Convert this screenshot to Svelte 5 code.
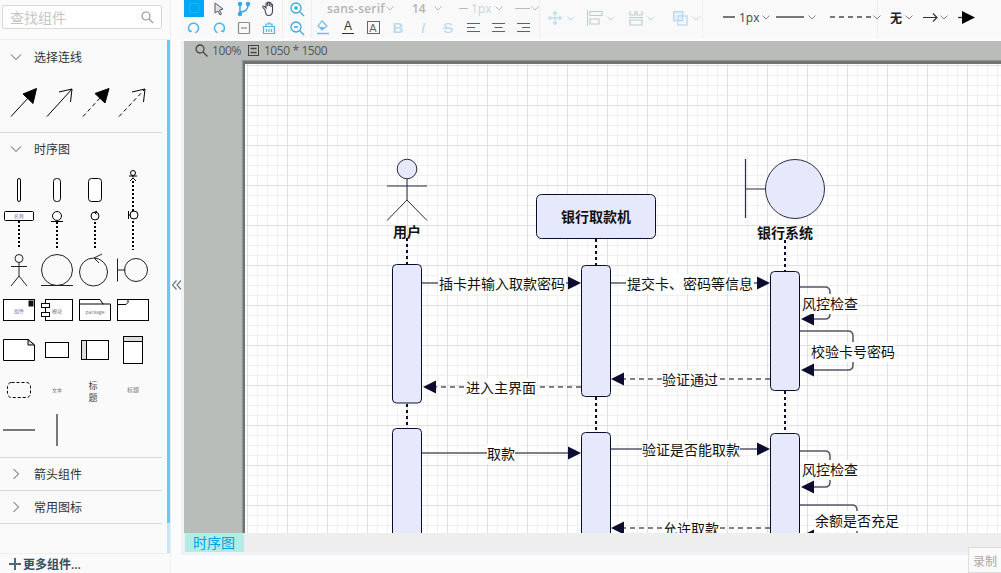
<script>
  const labels = [
    { t: '插卡并输入取款密码', x: 502, y: 284, w: 128 },
    { t: '提交卡、密码等信息', x: 690, y: 284, w: 128 },
    { t: '风控检查', x: 830, y: 304, w: 56 },
    { t: '校验卡号密码', x: 853, y: 352, w: 84 },
    { t: '验证通过', x: 690, y: 380, w: 56 },
    { t: '进入主界面', x: 501, y: 388, w: 70 },
    { t: '取款', x: 501, y: 454, w: 28 },
    { t: '验证是否能取款', x: 691, y: 450, w: 98 },
    { t: '风控检查', x: 830, y: 470, w: 56 },
    { t: '余额是否充足', x: 857, y: 521, w: 84 },
    { t: '允许取款', x: 691, y: 529, w: 56 }
  ];
  const activations = [
    [392.5, 264.5, 138.5], [581.5, 265.5, 131], [770.5, 271.5, 119],
    [392.5, 428.5, 130], [581.5, 432.5, 130], [770.5, 433.5, 130]
  ];
  const lifelines = [
    [407, 238, 264], [596, 239, 265], [785, 240, 271],
    [407, 404, 428], [596, 397, 432], [785, 391, 433]
  ];
  const right = (x, y) => `${x - 13},${y - 6.5} ${x},${y} ${x - 13},${y + 6.5}`;
  const left = (x, y) => `${x + 13},${y - 6.5} ${x},${y} ${x + 13},${y + 6.5}`;
</script>

{#snippet chev(cls = '')}
  <svg class="chev {cls}" width="8" height="5" viewBox="0 0 8 5"><path d="M.5.5 4 4 7.5.5" fill="none" stroke="currentColor" /></svg>
{/snippet}

{#snippet head(name, open)}
  <div class="head">
    <svg width="12" height="12" viewBox="0 0 12 12">
      {#if open}
        <path d="M1 3.500 6 8.500 11 3.500" fill="none" stroke="#555" />
      {:else}
        <path d="M3.500 1 8.500 6 3.500 11" fill="none" stroke="#555" />
      {/if}
    </svg>
    <span>{name}</span>
  </div>
{/snippet}

<div class="app">
  <aside class="side">
    <div class="searchwrap">
      <div class="search">
        <span>查找组件</span>
        <svg width="14" height="14" viewBox="0 0 14 14" fill="none" stroke="#999" stroke-width="1.200"><circle cx="6" cy="6" r="4" /><path d="m9 9 4 4" /></svg>
      </div>
    </div>
    <div class="sidebody">
      <div class="sections">
        <div class="first">{@render head('选择连线', true)}</div>
        <svg class="block" width="167" height="57" viewBox="0 75 167 57" fill="none" stroke="#000">
          <path d="M11 116.500 29 97" />
          <polygon points="36.500,88.500 23,94 33,103.500" fill="#000" />
          <path d="M47 116.500 72 89M59 92l13-3-1.500 13" />
          <path d="M83 116.500 100 98" stroke-dasharray="4 3" />
          <polygon points="109,88.500 95,93.500 105,103" fill="#000" />
          <path d="M119 116.500 145 89" stroke-dasharray="4 3" />
          <path d="M132 92l13-3-1.500 13" />
        </svg>
        <div class="rule"></div>
        {@render head('时序图', true)}
        <svg class="block palette" width="167" height="290" viewBox="0 167 167 290" fill="#fff" stroke="#000">
          <rect x="17.500" y="178.500" width="3" height="23" rx="1.500" />
          <rect x="53.500" y="178.500" width="7" height="23" rx="3" />
          <rect x="88.500" y="178.500" width="13" height="23" rx="3" />
          <g fill="none">
            <circle cx="133" cy="173" r="2.500" />
            <path d="M129 176h8M133 175.500v2M130 181l3-3 3 3" />
            <path d="M133 181v32M133 221v29M19 221v28M57 222v27M95 222v27" stroke-width="2" stroke-dasharray="2 2" />
            <circle cx="134" cy="215" r="4" />
            <path d="M128.500 211v8M128.500 215h2" />
            <circle cx="57" cy="216" r="4.500" />
            <path d="M51 221.500h12" />
            <circle cx="95" cy="216" r="4" />
            <path d="M97 211l-2.500 1.500 2 2" />
          </g>
          <rect x="4.500" y="211.500" width="29" height="9" rx="1" />
          <text class="tiny" x="19" y="218" text-anchor="middle">名称</text>
          <g fill="none" stroke="#222">
            <circle cx="19" cy="258.500" r="4" />
            <path d="M19 262.500V276M11 266.500h16M11 286l8-10 8 10" />
            <circle cx="57" cy="270" r="15.500" />
            <path d="M41 285.500h32" />
            <circle cx="93.500" cy="272" r="14" />
            <path d="M102 254l-8 4 5 5" />
            <path d="M117.500 258.500v23M117.500 270h8" />
            <circle cx="136" cy="270" r="11.500" />
          </g>

          <g>
            <rect x="3.500" y="299.500" width="31" height="21" />
            <rect x="28.500" y="300.500" width="5" height="6" fill="#111" stroke="none" />
            <text class="tiny" x="19" y="312.500" text-anchor="middle">组件</text>
            <rect x="45.500" y="299.500" width="27" height="21" />
            <rect x="41.500" y="303.500" width="8" height="4" />
            <rect x="41.500" y="312.500" width="8" height="4" />
            <text class="tiny" x="57" y="312.500" text-anchor="middle" dx="0">模块</text>
            <path d="M79.500 320.500v-21H100l3 4.500h7.500v16.500z" />
            <path d="M79.500 304h24" fill="none" />
            <text class="tiny" x="95" y="313.500" text-anchor="middle">package</text>
            <rect x="117.500" y="299.500" width="31" height="21" />
            <path d="M117.500 304.500H126l2-2v-3" fill="none" />
          </g>

          <g>
            <path d="M3.500 339.500H28l6.500 5.500v15.500h-31z" />
            <path d="M28 339.500v5.500h6.500z" fill="#ddd" />
            <rect x="45.500" y="342.500" width="23" height="15" />
            <rect x="81.500" y="340.500" width="27" height="19" />
            <rect x="81.500" y="340.500" width="5" height="19" fill="#ddd" />
            <rect x="123.500" y="336.500" width="19" height="27" />
            <rect x="123.500" y="336.500" width="19" height="5" fill="#ddd" />
          </g>

          <rect x="7.500" y="382.500" width="23" height="15" rx="4" stroke-dasharray="3 2" fill="none" />
          <text class="tiny" x="57" y="392" text-anchor="middle">文本</text>
          <text class="title" x="93" y="389" text-anchor="middle">标</text>
          <text class="title" x="93" y="401" text-anchor="middle">题</text>
          <text class="tiny wider" x="133" y="392" text-anchor="middle">标题</text>
          <path d="M3 430h32M57 414v32" stroke="#777" stroke-width="2" fill="none" />
        </svg>
        <div class="rule"></div>
        {@render head('箭头组件', false)}
        <div class="rule"></div>
        {@render head('常用图标', false)}
        <div class="rule"></div>
      </div>
      <div class="scroll"><div class="thumb"></div></div>
    </div>
    <div class="more">
      <svg width="12" height="12" viewBox="0 0 12 12"><path d="M6 0v12M0 6h12" stroke="#4a6a85" stroke-width="2" /></svg>
      <span>更多组件...</span>
    </div>
  </aside>

  <div class="collapse">
    <svg width="10" height="10" viewBox="0 0 10 10" fill="none" stroke="#64788a" stroke-width="1.200"><path d="M4.500 .5 .5 5l4 4.500M9 .5 5 5l4 4.500" /></svg>
  </div>

  <main class="main">
    <header class="toolbar">
      <div class="grp g1">
        <div class="tool">
          <svg class="sel" width="20" height="17" viewBox="0 0 20 17"><rect width="20" height="17" fill="#00a8f4" /><rect x="5.500" y="3.500" width="9" height="9" fill="none" stroke="#3fc0f8" stroke-dasharray="1 1" /></svg>
        </div>
        <div class="tool">
          <svg width="14" height="14" viewBox="0 0 14 14"><path d="M3 1l8 6-3.500 1 2 4-1.500 1-2-4L3 11z" fill="#dfe6ea" stroke="#556" /></svg>
        </div>
        <div class="tool">
          <svg width="16" height="16" viewBox="0 0 16 16" fill="none" stroke="#3aa8e0" stroke-width="1.500"><path d="M4 3v10M4 11c5 0 8-2 8-7" /><circle cx="4" cy="3" r="1.500" fill="#3aa8e0" /><circle cx="12" cy="3" r="1.500" fill="#3aa8e0" /><circle cx="4" cy="13" r="1.500" fill="#3aa8e0" /></svg>
        </div>
        <div class="tool">
          <svg width="16" height="16" viewBox="0 0 16 16" fill="none" stroke="#445" stroke-width="1.100"><path d="M4 9 2 6.500c-.7-1 .6-2 1.400-1.200L5 7V3c0-1.200 1.500-1.200 1.600 0v2-3c0-1.200 1.700-1.200 1.700 0v3-2.500c0-1.200 1.700-1.200 1.700 0V6 4c0-1 1.500-1 1.500 0v6c0 3-1.500 4.500-4 4.500S5 13 4 9z" /></svg>
        </div>
        <div class="tool">
          <svg width="14" height="14" viewBox="0 0 14 14" fill="none" stroke="#4db5ee" stroke-width="1.500"><path d="M2.800 10.500A5 5 0 1 1 8.500 11.800M1.500 8.500l1.300 2 2-.8" /></svg>
        </div>
        <div class="tool">
          <svg width="14" height="14" viewBox="0 0 14 14" fill="none" stroke="#4db5ee" stroke-width="1.500"><path d="M11.200 10.500A5 5 0 1 0 5.500 11.800M12.500 8.500l-1.300 2-2-.8" /></svg>
        </div>
        <div class="tool">
          <svg width="14" height="14" viewBox="0 0 14 14" fill="none" stroke="#8a8a8a" stroke-width="1.200"><rect x="1.500" y="1.500" width="11" height="11" rx="1" /><path d="M4 7h6" /></svg>
        </div>
        <div class="tool">
          <svg width="14" height="14" viewBox="0 0 14 14" fill="none" stroke="#4db5ee" stroke-width="1.200"><path d="M1.500 5.500h11v7h-11zM4 5.500V3h6v2.500M7 1v2M4.500 8v3M7 8v3M9.500 8v3" /></svg>
        </div>
      </div>

      <div class="grp g2">
        <div class="tool">
          <svg width="16" height="16" viewBox="0 0 16 16" fill="none" stroke="#3aa8e0" stroke-width="1.300"><circle cx="7" cy="7" r="5" /><path d="M11 11l4 4M5 7h4M7 5v4" /></svg>
        </div>
        <div class="tool">
          <svg width="16" height="16" viewBox="0 0 16 16" fill="none" stroke="#3aa8e0" stroke-width="1.300"><circle cx="7" cy="7" r="5" /><path d="M11 11l4 4M5 7h4" /></svg>
        </div>
      </div>

      <div class="grp g3">
        <div class="fontrow">
          <span class="fontname">sans-serif</span>
          {@render chev('c1')}
          <span class="fontsize">14</span>
          {@render chev('c2')}
          <span class="dash"></span>
          <span class="px">1px</span>
          {@render chev('c3')}
          <span class="dash wide"></span>
          {@render chev('c4')}
        </div>
        <div class="fmt">
          <span class="cell">
            <svg width="14" height="15" viewBox="0 0 14 15"><path d="M6 1 2 6l4 4 5-4z" fill="none" stroke="#6cc0ee" stroke-width="1.200" /><path d="M3 7h7l-4 3z" fill="#6cc0ee" /><path d="M1 13.500h12" stroke="#6cc0ee" stroke-width="1.500" /></svg>
          </span>
          <span class="cell a">A<i></i></span>
          <span class="cell boxa">A</span>
          <span class="cell fb">B</span>
          <span class="cell fi">I</span>
          <span class="cell fs">S</span>
          <span class="cell al"><svg width="13" height="11" viewBox="0 0 13 11" stroke="#456a80"><path d="M0 1.500h13M0 5.500h8M0 9.500h13" /></svg></span>
          <span class="cell al"><svg width="13" height="11" viewBox="0 0 13 11" stroke="#456a80"><path d="M0 1.500h13M2.500 5.500h8M0 9.500h13" /></svg></span>
          <span class="cell al"><svg width="13" height="11" viewBox="0 0 13 11" stroke="#456a80"><path d="M0 1.500h13M5 5.500h8M0 9.500h13" /></svg></span>
        </div>
      </div>

      <div class="grp g4">
        <span class="item i1">
          <svg width="16" height="16" viewBox="0 0 16 16" fill="none" stroke="#c4deee" stroke-width="1.300"><path d="M8 2v12M2 8h12M6 4l2-2.500L10 4M6 12l2 2.500 2-2.500M4 6 1.500 8 4 10M12 6l2.500 2-2.500 2" /></svg>
          {@render chev('lb')}
        </span>
        <span class="item i2">
          <svg width="16" height="16" viewBox="0 0 16 16" fill="none" stroke="#bccdd0" stroke-width="1.200"><path d="M.5 0v16M3 1.500h12v4H3zM3 9h9v5H3z" /></svg>
          {@render chev('lb')}
        </span>
        <span class="item i3">
          <svg width="14" height="16" viewBox="0 0 14 16" fill="none" stroke="#bccdd0" stroke-width="1.200"><path d="M1 1v4h5V1M8 1v4h5V1M0 7.500h14M1 10h12v5H1z" /></svg>
          {@render chev('lb')}
        </span>
        <span class="item i4">
          <svg width="15" height="15" viewBox="0 0 15 15" fill="#e6f0f8" stroke="#b8d8f0" stroke-width="1.300"><rect x=".7" y=".7" width="9" height="9" /><rect x="5" y="5" width="9" height="9" fill="none" /></svg>
          {@render chev('lb')}
        </span>
      </div>

      <div class="grp g5">
        <span class="ln short"></span>
        <span class="px1">1px</span>
        {@render chev('gray p1')}
        <span class="ln solid"></span>
        {@render chev('gray p2')}
        <span class="ln dashed"></span>
        {@render chev('gray p3')}
      </div>

      <div class="grp g6">
        <span class="wu">无</span>
        {@render chev('gray q1')}
        <svg class="q2" width="15" height="9" viewBox="0 0 15 9" fill="none" stroke="#333" stroke-width="1.200"><path d="M0 4.500h14M10 .5l4 4-4 4" /></svg>
        {@render chev('gray q3')}
        <svg class="q4" width="17" height="13" viewBox="0 0 17 13"><path d="M0 6.500h5" stroke="#333" stroke-width="1.300" /><polygon points="4,0 17,6.500 4,13" fill="#000" /></svg>
      </div>
    </header>

    <section class="stage">
      <div class="canvas">
        <div class="zoominfo">
          <svg width="13" height="13" viewBox="0 0 13 13" fill="none" stroke="#444" stroke-width="1.300"><circle cx="5" cy="5" r="4" /><path d="m8 8 4.500 4.500" /></svg>
          <span class="pct">100%</span>
          <svg class="pg" width="13" height="13" viewBox="0 0 13 13" fill="none" stroke="#444"><rect x="1.500" y="1.500" width="10" height="10" /><path d="M3.500 4.500h6M3.500 8.500h6" stroke-width="1.500" /></svg>
          <span>1050 * 1500</span>
        </div>
        <div class="page">
          <svg class="diagram" width="756" height="469" viewBox="245 64 756 469">
            <g fill="#e6e9fb" stroke="#2b2b45">
              <circle cx="407" cy="169" r="9.800" />
              <path d="M407 179v21M387 186h40M387 220.500l20-20.500 20 20.500" fill="none" />
              <circle cx="795" cy="189" r="29.500" />
              <path d="M745.500 159v59M745.500 189H765" fill="none" stroke-width="1.200" />
            </g>
            <rect class="node" x="536.500" y="194.500" width="119" height="44" rx="5" />
            {#each lifelines as [x, y1, y2]}
              <line class="life" x1={x} y1={y1} x2={x} y2={y2} />
            {/each}
            <text class="bold" x="407" y="237" text-anchor="middle">用户</text>
            <text class="bold" x="596" y="222" text-anchor="middle">银行取款机</text>
            <text class="bold" x="785" y="238" text-anchor="middle">银行系统</text>

            <g class="links">
              <path d="M421 283h148M610 283h148M421 453h148M610 449h148" />
              <path d="M800 287h25q5 0 5 5v22q0 5-5 5h-13M800 331h48q5 0 5 5v29q0 5-5 5h-36M800 451h25q5 0 5 5v26q0 5-5 5h-13M800 505h52q5 0 5 5v28" />
              <path d="M770 379H623M581 387H434M770 528H623" stroke-dasharray="5 4" />
            </g>

            {#each activations as [x, y, h]}
              <rect class="node" x={x} y={y} width="29" height={h} rx="4" />
            {/each}

            <g fill="#0c0c30">
              <polygon points={right(581, 283)} />
              <polygon points={right(770, 283)} />
              <polygon points={right(581, 453)} />
              <polygon points={right(770, 449)} />
              <polygon points={left(801, 319)} />
              <polygon points={left(801, 370)} />
              <polygon points={left(801, 487)} />
              <polygon points={left(801, 536)} />
              <polygon points={left(611, 379)} />
              <polygon points={left(423, 387)} />
              <polygon points={left(611, 528)} />
            </g>

            {#each labels as l}
              <rect x={l.x - l.w / 2} y={l.y - 10} width={l.w} height="20" fill="#fff" />
              <text class="label" x={l.x} y={l.y + 5} text-anchor="middle">{l.t}</text>
            {/each}
          </svg>
        </div>
      </div>
      <div class="tabs"><span class="tab">时序图</span></div>
    </section>
    <div class="foot"></div>
  </main>
  <button class="record">录制</button>
</div>

<style>
  :global(body) {
    margin: 0;
    background: #fbfbfb;
  }
  .app {
    position: relative;
    display: flex;
    width: 1001px;
    height: 573px;
    overflow: hidden;
    font-family: "Open Sans", "Noto Sans CJK SC", sans-serif;
    font-size: 12px;
    color: #333;
    background: #fbfbfb;
  }
  svg {
    flex: none;
    display: block;
  }
  .side {
    flex: none;
    box-sizing: border-box;
    width: 171px;
    height: 573px;
    display: flex;
    flex-direction: column;
    background: #fafafa;
    border-right: 1px solid #eeeeee;
  }
  .searchwrap {
    flex: none;
    height: 40px;
    box-sizing: border-box;
    padding: 5px 8px 0 2px;
    border-bottom: 1px solid #eeeeee;
  }
  .search {
    box-sizing: border-box;
    height: 24px;
    border: 1px solid #d9d9d9;
    border-radius: 2px;
    background: #fff;
    display: flex;
    align-items: center;
    justify-content: space-between;
    padding: 0 7px;
    font-size: 14px;
    color: #c6c6c6;
  }
  .sidebody {
    flex: 1;
    min-height: 0;
    display: flex;
  }
  .sections {
    width: 167px;
  }
  .block {
    display: block;
  }
  .head {
    height: 32px;
    display: flex;
    align-items: center;
    padding-left: 10px;
    gap: 12px;
    font-size: 12px;
    color: #333;
  }
  .first .head {
    height: 33px;
    margin-bottom: 2px;
  }
  .palette {
    margin-top: 2px;
  }
  .rule {
    width: 162px;
    height: 1px;
    background: #d9d9d9;
  }
  .tiny {
    font-size: 5px;
    fill: #777;
    stroke: none;
  }
  .wider {
    font-size: 6px;
  }
  .title {
    font-size: 9px;
    fill: #444;
    stroke: none;
  }
  .scroll {
    width: 3px;
    background: #c9e6f5;
  }
  .thumb {
    height: 483px;
    background: #66c8ff;
  }
  .more {
    flex: none;
    height: 20px;
    box-sizing: border-box;
    border-top: 1px solid #eeeeee;
    display: flex;
    align-items: center;
    gap: 2px;
    padding-left: 9px;
    font-weight: 600;
    color: #2f4f66;
  }
  .collapse {
    flex: none;
    width: 10px;
    height: 573px;
    box-sizing: border-box;
    padding-top: 280px;
    padding-left: 1px;
  }
  .main {
    flex: 1;
    min-width: 0;
    display: flex;
    flex-direction: column;
  }
  .toolbar {
    flex: none;
    height: 38px;
    display: flex;
    background: #f9f9f9;
  }
  .grp {
    flex: none;
    box-sizing: border-box;
    border-right: 1px solid #eeeeee;
    height: 38px;
  }
  .g1 {
    width: 102px;
    display: grid;
    grid-template-columns: repeat(4, 25px);
    grid-template-rows: 17px 21px;
  }
  .g2 {
    width: 29px;
    display: grid;
    grid-template-rows: 17px 21px;
  }
  .tool {
    display: flex;
    align-items: center;
    justify-content: center;
  }
  .g3 {
    width: 228px;
  }
  .fontrow {
    height: 17px;
    display: flex;
    align-items: center;
    color: #b4b4b4;
    font-weight: 600;
  }
  .fontname {
    margin-left: 15px;
    width: 54px;
    font-size: 12px;
    letter-spacing: .2px;
    white-space: nowrap;
  }
  .chev {
    color: #b8b8b8;
  }
  .c1 {
    margin-left: 5px;
  }
  .fontsize {
    margin-left: 18px;
    font-size: 12px;
    color: #bcb4a8;
  }
  .c2 {
    margin-left: 8px;
  }
  .dash {
    width: 12px;
    height: 1px;
    margin-left: 17px;
    background: #bbb;
  }
  .dash.wide {
    width: 19px;
    margin-left: 12px;
  }
  .px {
    margin-left: 3px;
    font-weight: 400;
    color: #c6d6d6;
  }
  .c3 {
    margin-left: 4px;
  }
  .c4 {
    margin-left: 1px;
  }
  .fmt {
    height: 21px;
    margin-left: -1.500px;
    display: grid;
    grid-template-columns: repeat(9, 25px);
  }
  .cell {
    display: flex;
    align-items: center;
    justify-content: center;
    position: relative;
    font-size: 12px;
    font-family: "Liberation Sans", sans-serif;
  }
  .a {
    color: #333;
    flex-direction: column;
    line-height: 11px;
  }
  .a i {
    display: block;
    width: 12px;
    height: 1px;
    margin-top: 1px;
    background: #333;
  }
  .boxa {
    color: #666;
    font-size: 11px;
  }
  .boxa::before {
    content: "";
    position: absolute;
    left: 6px;
    top: 4px;
    width: 11px;
    height: 11px;
    border: 1px solid #666;
  }
  .fb {
    color: #bcd9f0;
    font-size: 15px;
    font-weight: 700;
  }
  .fi {
    color: #bcd9f0;
    font-size: 15px;
    font-style: italic;
  }
  .fs {
    color: #bcd9f0;
    font-size: 15px;
    text-decoration: line-through;
  }
  .g4 {
    width: 163px;
    display: flex;
    align-items: center;
    padding: 0 0 2px 7px;
  }
  .item {
    display: flex;
    align-items: center;
    gap: 4px;
  }
  .i2 {
    margin-left: 12px;
  }
  .i3 {
    margin-left: 14px;
  }
  .i4 {
    margin-left: 18px;
  }
  .lb {
    color: #b8d8f0;
  }
  .g5 {
    width: 175px;
    display: flex;
    align-items: center;
    padding: 0 0 4px 20px;
  }
  .ln {
    flex: none;
    height: 2px;
    background: #777;
  }
  .ln.short {
    width: 12px;
  }
  .ln.solid {
    width: 28px;
    margin-left: 6px;
  }
  .ln.dashed {
    width: 41px;
    margin-left: 14px;
    background: repeating-linear-gradient(90deg, #777 0 5px, transparent 5px 9px);
  }
  .px1 {
    margin-left: 4px;
    color: #444;
    font-size: 12px;
  }
  .p1 {
    margin-left: 3px;
  }
  .p2 {
    margin-left: 4px;
  }
  .gray {
    color: #888;
  }
  .p3 {
    margin-left: 2px;
  }
  .g6 {
    flex: 1;
    border: 0;
    display: flex;
    align-items: center;
    padding: 0 0 3px 12px;
  }
  .wu {
    font-size: 12px;
    font-weight: 700;
    color: #222;
  }
  .q1 {
    margin-left: 3px;
  }
  .q2 {
    margin-left: 10px;
  }
  .q3 {
    margin-left: 2px;
  }
  .q4 {
    margin-left: 10px;
  }
  .stage {
    flex: none;
    height: 514px;
    margin-top: 3px;
    box-sizing: border-box;
    padding: 0 0 3px 3px;
    background: #eff3f7;
    display: flex;
    flex-direction: column;
  }
  .canvas {
    flex: none;
    height: 492px;
    position: relative;
    overflow: hidden;
    background: #b8bdba;
  }
  .zoominfo {
    height: 19px;
    display: flex;
    align-items: center;
    gap: 4px;
    padding-left: 11px;
    font-size: 12px;
    color: #555;
    letter-spacing: -.4px;
  }
  .pct {
    margin-right: 2px;
  }
  .page {
    width: 900px;
    height: 500px;
    margin-left: 61px;
    margin-top: 4px;
    background-color: #fff;
    background-image:
      linear-gradient(#e0e0e0 1px, transparent 1px),
      linear-gradient(90deg, #e0e0e0 1px, transparent 1px),
      linear-gradient(#f0f0f0 1px, transparent 1px),
      linear-gradient(90deg, #f0f0f0 1px, transparent 1px);
    background-size: 40px 40px, 40px 40px, 10px 10px, 10px 10px;
    background-position: 0 1px, 2px 0, 0 1px, 2px 0;
    box-shadow: -2px -3px 0 #727272, -3px -4px 1px #94989a;
  }
  .diagram {
    display: block;
    font-family: "Noto Sans CJK SC", sans-serif;
  }
  .node {
    fill: #e6e9fb;
    stroke: #0c0c30;
  }
  .life {
    stroke: #0c0c30;
    stroke-width: 2;
    stroke-dasharray: 3 3;
  }
  .bold {
    font-size: 14px;
    font-weight: 700;
    fill: #111;
  }
  .label {
    font-size: 14px;
    fill: #111;
  }
  .links {
    fill: none;
    stroke: #55556a;
    stroke-width: 1.500;
  }
  .tabs {
    flex: none;
    height: 19px;
    background: #eeeeee;
    position: relative;
  }
  .tab {
    display: block;
    box-sizing: border-box;
    width: 59px;
    height: 19px;
    margin-left: 1px;
    background: #b2ece2;
    border-right: 1px solid #ddd;
    text-align: center;
    font-size: 14px;
    line-height: 19px;
    color: #00a2e8;
  }
  .foot {
    flex: 1;
    background: #fbfbfb;
  }
  .record {
    position: absolute;
    left: 968px;
    top: 547px;
    width: 33px;
    height: 26px;
    padding: 0;
    box-sizing: border-box;
    border: 1px solid #dddddd;
    border-right: 0;
    background: #fafafa;
    color: #a8a8a8;
    font: 12px "Noto Sans CJK SC", sans-serif;
  }
</style>
